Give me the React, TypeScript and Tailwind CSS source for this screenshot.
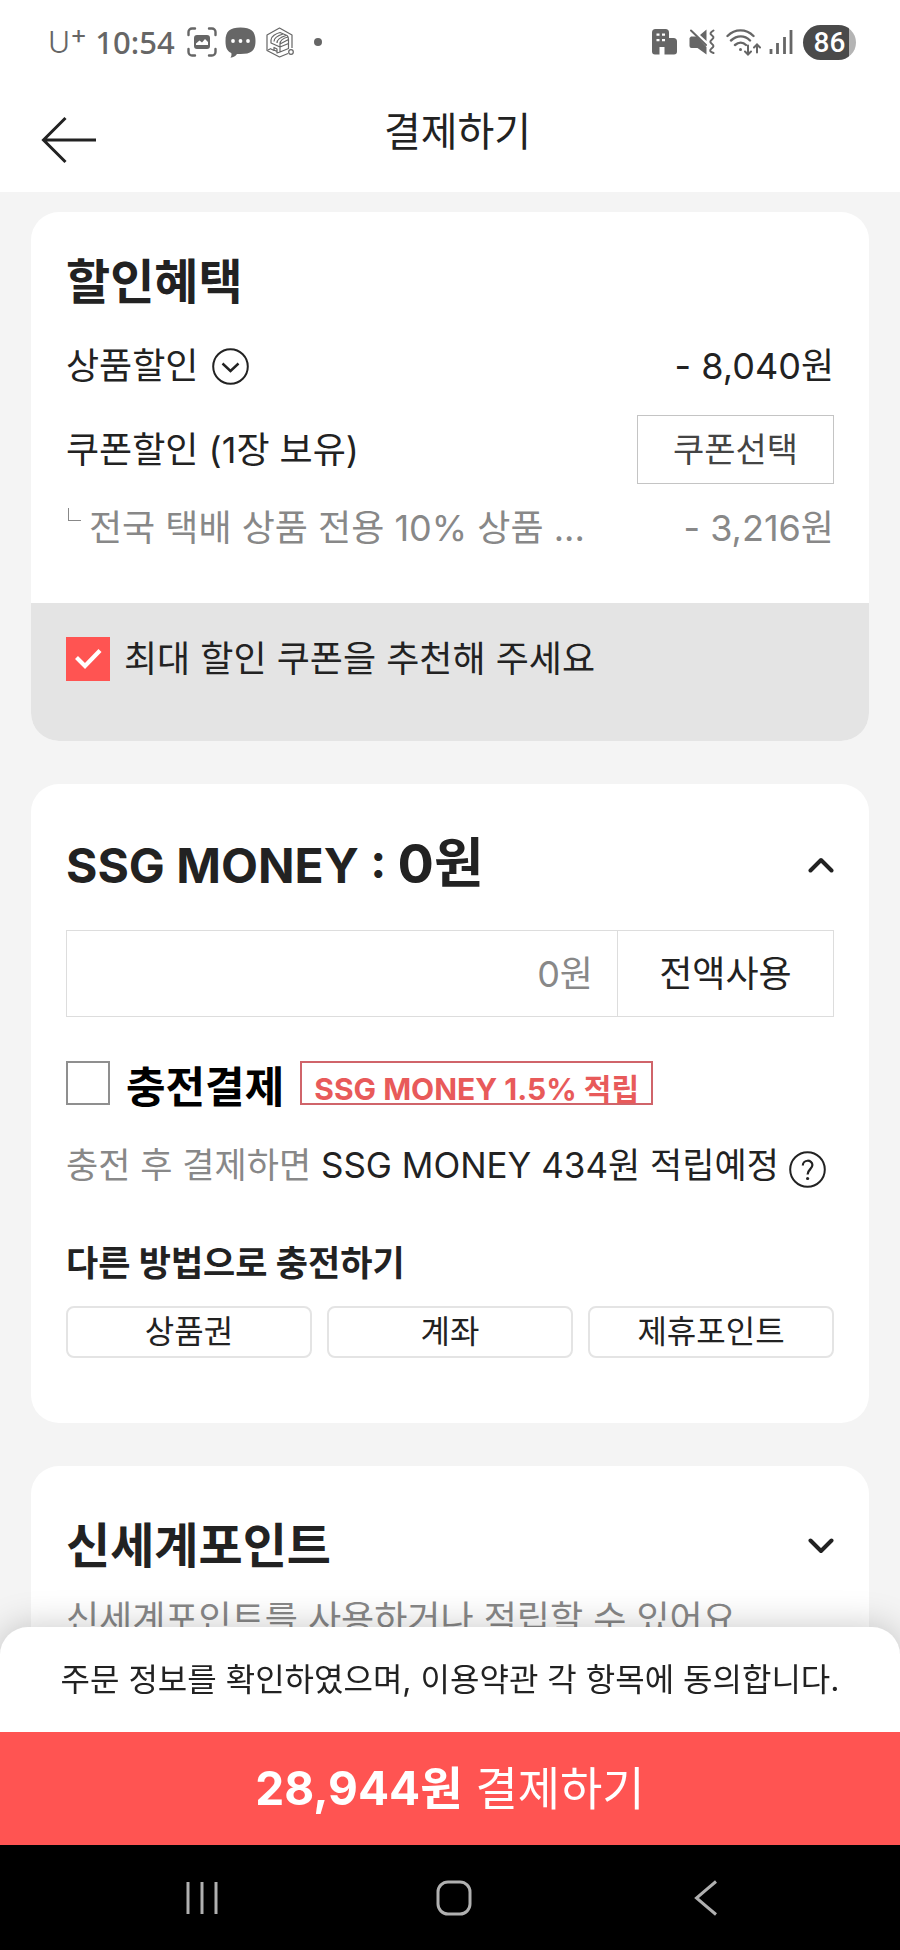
import { useState } from 'react';
import type { ReactNode } from 'react';

const chargeMethods = ['상품권', '계좌', '제휴포인트'];

function StatusBar() {
  return (
    <div className="flex items-center justify-between pt-6 pl-12 pr-11 text-[#666]">
      <div className="flex items-center h-9">
        <span className="flex items-start leading-8 text-[30px] font-light">
          U<sup className="top-0 text-[26px] leading-4 font-normal">+</sup>
        </span>
        <span className="ml-2 font-['Noto_Sans',sans-serif] text-[31px] leading-9 font-medium">10:54</span>

        {/* Screen capture */}
        <svg className="ml-3 w-[30px] h-[30px]" viewBox="0 0 30 30" fill="none" stroke="currentColor" strokeWidth="2.4" strokeLinecap="round">
          <path d="M1.5 8V5A3.5 3.5 0 0 1 5 1.5H8M22 1.5h3A3.5 3.5 0 0 1 28.5 5v3M28.5 22v3a3.5 3.5 0 0 1-3.5 3.5h-3M8 28.5H5A3.5 3.5 0 0 1 1.5 25v-3" />
          <path fill="currentColor" stroke="none" fillRule="evenodd" d="M10 8h10a3 3 0 0 1 3 3v8a3 3 0 0 1-3 3H10a3 3 0 0 1-3-3v-8a3 3 0 0 1 3-3zm-1 10h12v-3l-3-3-3 3.500-2.500-2-3.500 3z" />
        </svg>

        {/* Message */}
        <svg className="ml-2 w-[31px] h-[31px]" viewBox="0 0 31 31" fill="currentColor">
          <path d="M15.5.5C26 .5 30.5 4 30.5 14S26 27 15.5 27H12c-1.5 2-3.500 3.500-6.500 3.700 1-1.500 1.200-3 .8-4.700C2 24 .5 20.500.5 14 .5 4 5 .5 15.500.5z" />
          <g fill="#fff">
            <circle cx="8" cy="14" r="1.9" />
            <circle cx="15.5" cy="14" r="1.9" />
            <circle cx="23" cy="14" r="1.9" />
          </g>
        </svg>

        {/* Parcel shop */}
        <svg className="ml-2.5 w-7 h-[31px]" viewBox="0 0 28 31" fill="none" stroke="currentColor" strokeWidth="1.2" strokeLinejoin="round">
          <path d="M22 26.5 13.5 30 1 23.5V8L13.5 1 26 8v13" />
          <circle cx="25" cy="25" r="2.3" />
          <path d="M5 13c0-3.500 5-6.500 9-7.500l7 3c1.500 1 1.500 2 1.500 4L14 17v8l-3 1v-4l-3-1.500v3L5 22M5 13v3l9 4M8 14.500c0-4 4-6 9-7.500M11 16c0-4 4-6 9-7.500M14 17c0-4 4-6 8-7M22.500 12.500v9L14 25M14 20l8.500-3.500M2 23l3-1.500M8 23l3 1.500" />
        </svg>
        <span className="ml-5 w-2 h-2 rounded-full bg-[#666]" />
      </div>

      <div className="flex items-center h-9">
        {/* Building */}
        <svg className="w-[25px] h-[26px]" viewBox="0 0 25 26" fill="currentColor">
          <path fillRule="evenodd" d="M3.5 0h10A3.5 3.5 0 0 1 17 3.5V9h4.5a3.5 3.5 0 0 1 3.5 3.5v10a3 3 0 0 1-3 3h-9.5V18h-5v7.5H3a3 3 0 0 1-3-3v-19A3.5 3.5 0 0 1 3.5 0zM4.500 4.500v2.200h3V4.500zm5.500 0v2.200h3V4.500zM4.500 10v2.200h3V10zm5.500 0v2.200h3V10z" />
        </svg>

        {/* Vibrate, sound off */}
        <svg className="ml-3 w-[26px] h-[26px]" viewBox="0 0 26 26" fill="none" stroke="currentColor" strokeWidth="2" strokeLinecap="round">
          <path fill="currentColor" stroke="none" d="M2 7.500h5.500L17.500 18v7.500L8.500 19h-6A2 2 0 0 1 .5 17V9zM17.500.5V12L11 6z" />
          <path d="M2 1.500 17 16" />
          <path d="M24.500 1.500c-3 2-4 3-2 4.500s3 2.500.5 4.500-2 3 0 4.500 2 2.500-.5 4.500-1.500 3 2 4.500" />
        </svg>

        {/* Wifi */}
        <svg className="ml-[11px] w-[35px] h-[27px]" viewBox="0 0 35 27" fill="none" stroke="currentColor" strokeWidth="2.4" strokeLinecap="round">
          <path d="M1.500 7C9-.5 20-.5 27.500 7M5 11.500c6-5.500 13.500-5.500 19 0M9 16c3.500-3 8-3 11 0" />
          <circle cx="14.5" cy="20.5" r="1.5" fill="currentColor" stroke="none" />
          <path strokeWidth="2" d="M22 16.500v8.500M19 22.500l3 3 3-3M31 23.500V16M28 18.500l3-3 3 3" />
        </svg>

        {/* Signal */}
        <svg className="ml-2 w-6 h-6" viewBox="0 0 24 24" stroke="currentColor" strokeWidth="2.8">
          <path d="M2 19v5M8.500 13v11M15.500 7v17M22 0v24" />
        </svg>

        <span className="ml-2.5 w-[53px] h-[35px] rounded-full text-center bg-[linear-gradient(90deg,#4a4a4a_86%,#b4b4b4_86%)] font-[Roboto,sans-serif] text-[28px] leading-[35px] font-medium text-white">
          86
        </span>
      </div>
    </div>
  );
}

function Card({ children }: { children: ReactNode }) {
  return <section className="overflow-hidden rounded-[28px] bg-white">{children}</section>;
}

function Chevron({ up = false }: { up?: boolean }) {
  return (
    <svg className="w-[26px] h-4" viewBox="0 0 26 16" fill="none" stroke="currentColor" strokeWidth="4" strokeLinecap="round" strokeLinejoin="round">
      <path d={up ? 'M2.5 13.5 13 3l10.5 10.5' : 'M2.5 2.5 13 13 23.5 2.5'} />
    </svg>
  );
}

type CheckboxProps = {
  id: string;
  checked: boolean;
  onChange: (checked: boolean) => void;
};

function Checkbox({ id, checked, onChange }: CheckboxProps) {
  return (
    <span className="relative w-11 h-11 shrink-0">
      <input
        id={id}
        type="checkbox"
        checked={checked}
        onChange={(e) => onChange(e.target.checked)}
        className="block w-11 h-11 appearance-none border-2 border-[#8f8f8f] bg-white checked:border-[#ff5452] checked:bg-[#ff5452]"
      />
      {checked && (
        <svg className="absolute inset-0 pointer-events-none" viewBox="0 0 44 44" fill="none" stroke="#fff" strokeWidth="4.2">
          <path d="m10.500 20.500 8.500 8.500L34 13.500" />
        </svg>
      )}
    </span>
  );
}

export default function App() {
  const [recommend, setRecommend] = useState(true);
  const [charge, setCharge] = useState(false);
  const [amount, setAmount] = useState('0원');

  return (
    <div className="min-h-screen bg-[#f4f4f4] font-[Inter,'Noto_Sans_CJK_KR',sans-serif] text-[#222]">
      <header className="bg-white pb-7">
        <StatusBar />
        <div className="flex items-center pt-10 pl-[41px] pr-[82px]">
          <button type="button" aria-label="뒤로">
            <svg className="mt-4 w-14 h-12" viewBox="0 0 56 48" fill="none" stroke="currentColor" strokeWidth="3">
              <path d="M55 24H3M24.500 2 2.500 24l22 22" />
            </svg>
          </button>
          <h1 className="flex-1 text-center text-[40px] leading-[48px]">결제하기</h1>
        </div>
      </header>

      <main className="flex flex-col gap-[43px] px-[31px] pt-5 pb-48">
        {/* Discounts */}
        <Card>
          <div className="px-[35px] pt-[42px] pb-[51px] text-[36px] leading-[48px]">
            <h2 className="text-[48px] leading-[56px] font-bold">할인혜택</h2>
            <div className="mt-8 flex items-center justify-between">
              <button type="button" className="flex items-center gap-3.5">
                상품할인
                <svg className="w-[37px] h-[37px]" viewBox="0 0 37 37" fill="none" stroke="currentColor" strokeWidth="2">
                  <circle cx="18.5" cy="18.5" r="17.3" />
                  <path strokeWidth="2.4" d="m10.500 15.500 8 7.500 8-7.500" />
                </svg>
              </button>
              <span>- 8,040원</span>
            </div>
            <div className="mt-[25px] flex items-center justify-between">
              <span>쿠폰할인 (1장 보유)</span>
              <button type="button" className="w-[197px] h-[69px] border border-[#c4c4c4] text-[34px] text-[#444]">
                쿠폰선택
              </button>
            </div>
            <div className="mt-5 flex items-center justify-between text-[#888]">
              <span className="flex items-start gap-2">
                <span className="mt-1 ml-0.5 w-[13px] h-[13px] border-l border-b border-[#888]" />
                전국 택배 상품 전용 10% 상품 ...
              </span>
              <span>- 3,216원</span>
            </div>
          </div>
          <div className="flex items-center gap-3.5 px-[35px] pt-[34px] pb-[60px] bg-[#e4e4e4]">
            <Checkbox id="recommend" checked={recommend} onChange={setRecommend} />
            <label htmlFor="recommend" className="text-[36px] leading-[44px]">
              최대 할인 쿠폰을 추천해 주세요
            </label>
          </div>
        </Card>

        {/* SSG MONEY */}
        <Card>
          <div className="px-[35px] pt-12 pb-[65px]">
            <div className="flex items-center justify-between">
              <h2 className="text-[48px] leading-[64px] font-bold">
                SSG MONEY : <span className="text-[54px]">0원</span>
              </h2>
              <button type="button" aria-label="접기">
                <Chevron up />
              </button>
            </div>
            <div className="mt-8 flex h-[87px] border border-[#ddd] text-[36px]">
              <input
                aria-label="사용할 금액"
                value={amount}
                onChange={(e) => setAmount(e.target.value)}
                className="min-w-0 flex-1 px-6 text-right text-[#888]"
              />
              <button type="button" className="w-[216px] border-l border-[#ddd]">
                전액사용
              </button>
            </div>

            <div className="mt-11 flex h-11 items-start">
              <Checkbox id="charge" checked={charge} onChange={setCharge} />
              <label htmlFor="charge" className="ml-4 text-[43px] leading-[52px] font-bold text-black">
                충전결제
              </label>
              <span className="ml-4 h-11 border-2 border-[#d0646a] px-3 pt-2 text-[30px] leading-9 font-bold text-[#e85a5a]">
                SSG MONEY 1.5% 적립
              </span>
            </div>
            <div className="mt-9 flex items-center gap-2.5 text-[35px] leading-[48px]">
              <p>
                <span className="text-[#888]">충전 후 결제하면</span> SSG MONEY 434원 적립예정
              </p>
              <button type="button" aria-label="도움말">
                <svg className="mt-2 w-[37px] h-[37px]" viewBox="0 0 37 37" fill="none" stroke="currentColor" strokeWidth="2">
                  <circle cx="18.5" cy="18.5" r="17.3" />
                  <path strokeWidth="2.2" d="M13.800 14.500c0-6.300 9.600-6.300 9.600-.4 0 4-4.800 4.200-4.800 9.400" />
                  <circle cx="18.6" cy="27.5" r="1.6" fill="currentColor" stroke="none" />
                </svg>
              </button>
            </div>

            <h3 className="mt-[52px] text-[35px] leading-[44px] font-bold">다른 방법으로 충전하기</h3>
            <div className="mt-[21px] grid grid-cols-3 gap-[15px]">
              {chargeMethods.map((method) => (
                <button key={method} type="button" className="h-[52px] rounded-lg border-2 border-[#e4e4e4] text-[32px] leading-[44px]">
                  {method}
                </button>
              ))}
            </div>
          </div>
        </Card>

        {/* Shinsegae points */}
        <Card>
          <div className="px-[35px] pt-[52px] pb-4">
            <div className="flex items-center justify-between">
              <h2 className="text-[48px] leading-[56px] font-bold">신세계포인트</h2>
              <button type="button" aria-label="펼치기">
                <Chevron />
              </button>
            </div>
            <p className="mt-[21px] text-[36px] leading-[48px] text-[#888]">신세계포인트를 사용하거나 적립할 수 있어요</p>
          </div>
        </Card>
      </main>

      {/* Pay bar and system navigation */}
      <footer className="fixed inset-x-0 bottom-0 rounded-t-[28px] bg-white shadow-[0_0_36px_rgba(0,0,0,0.22)]">
        <p className="text-center text-[32px] leading-[105px]">
          주문 정보를 확인하였으며, 이용약관 각 항목에 동의합니다.
        </p>
        <button type="button" className="block w-full h-[113px] bg-[#ff5452] text-[46px] text-white">
          <strong className="font-bold">28,944원</strong> 결제하기
        </button>
        <nav className="flex h-[105px] items-center justify-between bg-black px-[180px] text-[#b0b0b0]">
          <button type="button" aria-label="최근 앱">
            <svg className="w-11 h-9" viewBox="0 0 44 36" stroke="currentColor" strokeWidth="3">
              <path d="M8 2v32M22 2v32M36 2v32" />
            </svg>
          </button>
          <button type="button" aria-label="홈">
            <svg className="w-9 h-9" viewBox="0 0 36 36" fill="none" stroke="currentColor" strokeWidth="3">
              <rect x="2" y="2" width="32" height="32" rx="10" />
            </svg>
          </button>
          <button type="button" aria-label="뒤로 가기">
            <svg className="w-9 h-9" viewBox="0 0 36 36" fill="none" stroke="currentColor" strokeWidth="3">
              <path d="M32 1.500 12.500 18 32 34.500" />
            </svg>
          </button>
        </nav>
      </footer>
    </div>
  );
}
